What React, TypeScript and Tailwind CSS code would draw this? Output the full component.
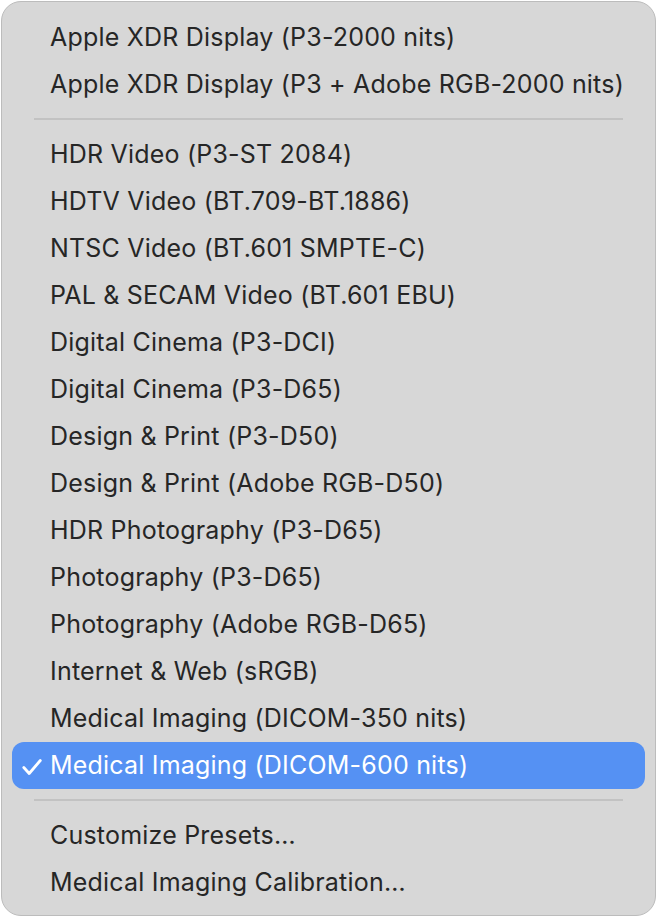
// Display preset menu — macOS style popup with one checked item.

type Item = { label: string; checked?: boolean } | "sep";

const ITEMS: Item[] = [
  { label: "Apple XDR Display (P3-2000 nits)" },
  { label: "Apple XDR Display (P3 + Adobe RGB-2000 nits)" },
  "sep",
  { label: "HDR Video (P3-ST 2084)" },
  { label: "HDTV Video (BT.709-BT.1886)" },
  { label: "NTSC Video (BT.601 SMPTE-C)" },
  { label: "PAL & SECAM Video (BT.601 EBU)" },
  { label: "Digital Cinema (P3-DCI)" },
  { label: "Digital Cinema (P3-D65)" },
  { label: "Design & Print (P3-D50)" },
  { label: "Design & Print (Adobe RGB-D50)" },
  { label: "HDR Photography (P3-D65)" },
  { label: "Photography (P3-D65)" },
  { label: "Photography (Adobe RGB-D65)" },
  { label: "Internet & Web (sRGB)" },
  { label: "Medical Imaging (DICOM-350 nits)" },
  { label: "Medical Imaging (DICOM-600 nits)", checked: true },
  "sep",
  { label: "Customize Presets…" },
  { label: "Medical Imaging Calibration…" },
];

function CheckMark() {
  return (
    <svg width="20" height="16" viewBox="0 0 20 16" fill="none">
      <path
        d="M1.8 8.5 L7.2 14.5 L18.3 1.5"
        stroke="currentColor"
        strokeWidth="2.8"
        strokeLinecap="round"
        strokeLinejoin="round"
      />
    </svg>
  );
}

export default function App() {
  return (
    <div className="w-[660px] h-[920px] bg-white p-[1px] font-['Inter',sans-serif]">
      <div className="w-[655px] h-[915px] rounded-[20px] border border-[#bcbcbc] bg-[#d7d7d7] pt-[12px] px-[10px]">
        {ITEMS.map((it, i) =>
          it === "sep" ? (
            <div key={i} className="h-[23px] pt-[10px] px-[22px]">
              <div className="h-[2px] w-full bg-[#c2c2c2]" />
            </div>
          ) : (
            <div
              key={i}
              className={
                it.checked
                  ? "h-[47px] flex items-center rounded-[12px] bg-[#5591f3] text-white"
                  : "h-[47px] flex items-center text-[#262626]"
              }
            >
              <span className="w-[38px] flex justify-end pr-[8px] pt-[2px]">
                {it.checked && <CheckMark />}
              </span>
              <span className="text-[25px] leading-none tracking-[0.2px]">{it.label}</span>
            </div>
          ),
        )}
      </div>
    </div>
  );
}
